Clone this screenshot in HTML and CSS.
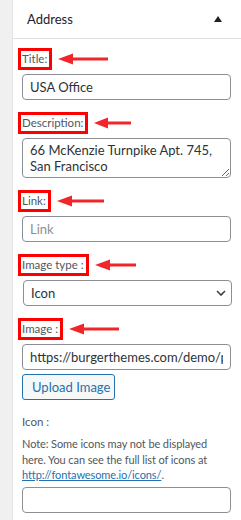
FILE: index.html
```html
<!DOCTYPE html>
<html lang="en">

<head>
  <meta charset="UTF-8">
  <meta name="viewport" content="width=device-width, initial-scale=1.0">
  <title>Address widget</title>

  <link rel="stylesheet" href="styles.css">
</head>

<body>
  <div class="sidebar">
    <div class="gutter"></div>
    <section class="panel">
      <header class="panel-head">
        <span class="panel-title">Address</span>
        <span class="caret"></span>
      </header>

      <form class="panel-body">
        <div class="field">
          <div class="label-row">
            <label class="mark" for="title">Title:</label>
            <svg class="arrow" width="50" height="12" viewBox="0 0 50 12"><path d="M10 6H50" stroke="#f0262a" stroke-width="3"/><path d="M0 6L15 0.5V11.5Z" fill="#f0262a"/></svg>
          </div>
          <input id="title" value="USA Office">
        </div>

        <div class="field">
          <div class="label-row">
            <label class="mark" for="desc">Description:</label>
            <svg class="arrow" width="37" height="12" viewBox="0 0 37 12"><path d="M10 6H37" stroke="#f0262a" stroke-width="3"/><path d="M0 6L14 0.5V11.5Z" fill="#f0262a"/></svg>
          </div>
          <textarea id="desc">66 McKenzie Turnpike Apt. 745, San Francisco</textarea>
        </div>

        <div class="field">
          <div class="label-row">
            <label class="mark" for="link">Link:</label>
            <svg class="arrow" width="47" height="12" viewBox="0 0 47 12"><path d="M10 6H47" stroke="#f0262a" stroke-width="3"/><path d="M0 6L15 0.5V11.5Z" fill="#f0262a"/></svg>
          </div>
          <input id="link" placeholder="Link">
        </div>

        <div class="field">
          <div class="label-row">
            <label class="mark" for="type">Image type :</label>
            <svg class="arrow" width="41" height="12" viewBox="0 0 41 12"><path d="M10 6H41" stroke="#f0262a" stroke-width="3"/><path d="M0 6L15 0.5V11.5Z" fill="#f0262a"/></svg>
          </div>
          <div class="select">
            <select id="type">
              <option>Icon</option>
              <option>Image</option>
            </select>
            <svg class="chevron" width="10" height="6" viewBox="0 0 10 6"><path d="M1 1L5 5L9 1" fill="none" stroke="#3c434a" stroke-width="1.6"/></svg>
          </div>
        </div>

        <div class="field">
          <div class="label-row">
            <label class="mark" for="image">Image :</label>
            <svg class="arrow" width="50" height="12" viewBox="0 0 50 12"><path d="M10 6H50" stroke="#f0262a" stroke-width="3"/><path d="M0 6L15 0.5V11.5Z" fill="#f0262a"/></svg>
          </div>
          <input id="image" value="https://burgerthemes.com/demo/pro/wp-content/uploads/icon.png">
          <button type="button" class="upload">Upload Image</button>
        </div>

        <div class="field icon-field">
          <label class="plain" for="icon">Icon :</label>
          <p class="note">Note: Some icons may not be displayed here. You can see the full list of icons at <a href="#">http://fontawesome.io/icons/</a>.</p>
          <input id="icon">
        </div>
      </form>
    </section>
  </div>
</body>

</html>
```

FILE: styles.css
```css
body {
  background: #f0f0f1;
  color: #50575e;
  font-family: Lato, "Liberation Sans", sans-serif;
  margin: 0;
}

.sidebar {
  display: flex;
  min-height: 520px;
}

.gutter {
  width: 12px;
}

.panel {
  background: #fff;
  border-left: 1px solid #e2e4e7;
  flex: 1;
}

.panel-head {
  align-items: center;
  border-bottom: 1px solid #e0e0e0;
  display: flex;
  height: 38px;
  justify-content: space-between;
  padding: 0 19px 0 14px;
}

.panel-title {
  color: #1d2327;
  font-size: 13px;
}

.caret {
  border-bottom: 6px solid #1d2327;
  border-left: 4px solid transparent;
  border-right: 4px solid transparent;
  height: 0;
  margin-top: -1px;
  width: 0;
}

.panel-body {
  padding: 9px 10px 0 9px;
}

.field {
  margin-bottom: 12px;
}

.label-row {
  align-items: center;
  display: flex;
  gap: 6px;
  margin-bottom: 4px;
}

.mark {
  border: 3px solid #f00;
  font-size: 11.5px;
  line-height: 16px;
  margin-left: -4px;
  padding: 0 2px 0 1px;
}

.plain {
  display: block;
  font-size: 11.5px;
  line-height: 16px;
  margin-top: 14px;
}

input,
textarea,
select {
  border: 1px solid #8c8f94;
  border-radius: 4px;
  box-sizing: border-box;
  color: #2c3338;
  display: block;
  font-family: inherit;
  font-size: 13px;
  width: 100%;
}

input {
  height: 26px;
  padding: 0 7px;
}

input::placeholder {
  color: #8c8f94;
}

textarea {
  height: 40px;
  line-height: 16px;
  padding: 3px 7px;
  resize: vertical;
}

.select {
  position: relative;
}

select {
  appearance: none;
  background: #fff;
  height: 26px;
  margin-left: 1px;
  padding: 0 24px 0 7px;
}

.chevron {
  position: absolute;
  right: 5px;
  top: 10px;
}

.upload {
  background: #f6f7f7;
  border: 1px solid #2271b1;
  border-radius: 3px;
  color: #2271b1;
  display: block;
  font-family: inherit;
  font-size: 13px;
  height: 26px;
  margin-top: 4px;
  padding: 0 9px;
  white-space: nowrap;
  width: 93px;
}

.icon-field {
  margin-bottom: 0;
}

.note {
  font-size: 11px;
  letter-spacing: -0.1px;
  line-height: 15.5px;
  margin: 6px 0 4px;
}

.note a {
  color: #2271b1;
}
```
